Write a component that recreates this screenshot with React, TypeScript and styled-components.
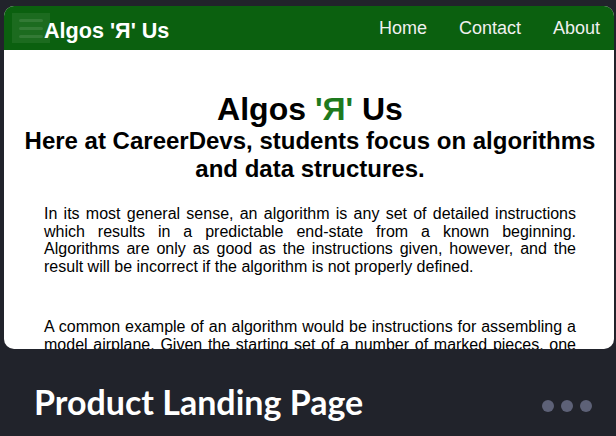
import styled, { createGlobalStyle } from "styled-components"

const GlobalStyle = createGlobalStyle`
  html, body {
    margin: 0;
    padding: 0;
    background: #21232b;
  }
`

const Page = styled.div`
  width: 616px;
  height: 436px;
  display: flex;
  flex-direction: column;
  background: #21232b;
  overflow: hidden;
`

const Card = styled.div`
  position: relative;
  height: 343px;
  margin: 6px 2px 0 4px;
  border-radius: 10px;
  background: #ffffff;
  overflow: hidden;
  display: flex;
  flex-direction: column;
  font-family: 'Liberation Sans', Arial, sans-serif;
`

const NavBar = styled.nav`
  flex: none;
  height: 44px;
  background: #0b600f;
  display: flex;
  align-items: center;
  justify-content: space-between;
  padding: 0 14px 0 40px;
`

const Burger = styled.div`
  position: absolute;
  left: 8px;
  top: 7px;
  width: 38px;
  height: 30px;
  background: rgba(255, 255, 255, 0.07);
  display: flex;
  flex-direction: column;
  justify-content: center;
  gap: 5px;
  padding: 0 7px;
  box-sizing: border-box;
`

const BurgerLine = styled.span`
  display: block;
  height: 3px;
  border-radius: 2px;
  background: rgba(255, 255, 255, 0.1);
`

const Logo = styled.span`
  color: #ffffff;
  font-weight: 700;
  font-size: 21.6px;
  margin-top: 6px;
`

const Links = styled.div`
  display: flex;
  gap: 32px;
`

const NavLink = styled.a`
  color: #f0f0f0;
  font-size: 18px;
  text-decoration: none;
`

const Content = styled.main`
  padding: 0 38px 0 40px;
  text-align: center;
  color: #000;
`

const Title = styled.h1`
  margin: 41px 0 0;
  font-size: 32px;
  line-height: 36px;
  font-weight: 700;
`

const Accent = styled.span`
  color: #1e7a1e;
`

const Subtitle = styled.h2`
  margin: 0 -22px;
  font-size: 24px;
  line-height: 28px;
  font-weight: 700;
`

const Paragraph = styled.p`
  margin: 0 0 43px;
  font-size: 16px;
  line-height: 17.5px;
  text-align: justify;
  &:first-of-type {
    margin-top: 22px;
  }
`

const Footer = styled.footer`
  flex: 1;
  display: flex;
  align-items: center;
  justify-content: space-between;
  padding: 0 24px 0 34px;
`

const FooterTitle = styled.span`
  color: #ffffff;
  font-family: Lato, 'Open Sans', sans-serif;
  font-weight: 700;
  font-size: 34px;
  margin-top: 18px;
`

const Dots = styled.div`
  display: flex;
  gap: 7px;
  margin-top: 26px;
`

const Dot = styled.span`
  width: 12px;
  height: 12px;
  border-radius: 50%;
  background: #5d6177;
`

export default function App() {
  return (
    <Page>
      <GlobalStyle />
      <Card>
        <NavBar>
          <Logo>Algos 'Я' Us</Logo>
          <Links>
            <NavLink>Home</NavLink>
            <NavLink>Contact</NavLink>
            <NavLink>About</NavLink>
          </Links>
        </NavBar>
        <Burger>
          <BurgerLine />
          <BurgerLine />
          <BurgerLine />
        </Burger>
        <Content>
          <Title>
            Algos <Accent>'Я'</Accent> Us
          </Title>
          <Subtitle>
            Here at CareerDevs, students focus on algorithms and data structures.
          </Subtitle>
          <Paragraph>
            In its most general sense, an algorithm is any set of detailed instructions
            which results in a predictable end-state from a known beginning. Algorithms
            are only as good as the instructions given, however, and the result will be
            incorrect if the algorithm is not properly defined.
          </Paragraph>
          <Paragraph>
            A common example of an algorithm would be instructions for assembling a model
            airplane. Given the starting set of a number of marked pieces, one can follow
            the instructions given to result in a predictable end-state: the completed
            airplane.
          </Paragraph>
        </Content>
      </Card>
      <Footer>
        <FooterTitle>Product Landing Page</FooterTitle>
        <Dots>
          <Dot />
          <Dot />
          <Dot />
        </Dots>
      </Footer>
    </Page>
  )
}
